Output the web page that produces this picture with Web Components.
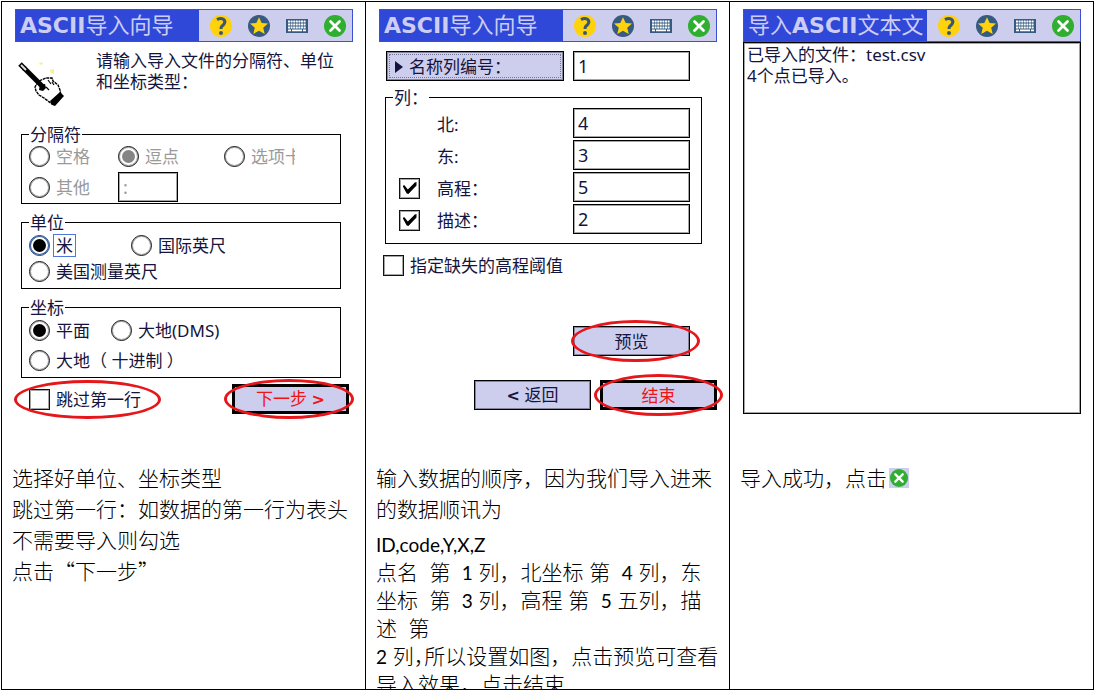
<!DOCTYPE html>
<html lang="zh-CN">
<head>
<meta charset="utf-8">
<title>ASCII导入向导</title>
<style>
  body {
    margin: 0;
    background: #fff;
    color: #14143c;
    font: 17px/21px "Noto Sans", "Noto Sans CJK SC", sans-serif;
  }
  .half { font-feature-settings: "halt"; }
  .quote { font-family: "Noto Sans CJK SC", sans-serif; }
  .latin { font-size: 19px; font-weight: 400; line-height: 19px; }
</style>
</head>
<body>
<step-board>
  <step-card>
    <first-screen slot="screen"></first-screen>
    <step-note>
      <p>选择好单位、坐标类型<br>跳过第一行：如数据的第一行为表头<br>不需要导入则勾选<br>点击<span class="quote">“下一步”</span></p>
    </step-note>
  </step-card>
  <step-card>
    <second-screen slot="screen"></second-screen>
    <step-note>
      <p>输入数据的顺序，因为我们导入进来<br>的数据顺讯为</p>
      <p class="dense"><span class="latin">ID,code,Y,X,Z</span><br>点名  第  <span class="latin">1</span> 列，北坐标 第  <span class="latin">4</span> 列，东<br>坐标  第  <span class="latin">3</span> 列，高程 第  <span class="latin">5</span> 五列，描<br>述  第<br><span class="latin">2</span> 列<span class="half">，</span>所以设置如图，点击预览可查看<br>导入效果，点击结束</p>
    </step-note>
  </step-card>
  <step-card>
    <third-screen slot="screen"></third-screen>
    <step-note>
      <p>导入成功，点击<close-badge></close-badge></p>
    </step-note>
  </step-card>
</step-board>

<script>
const define = (name, html, setup) => {
  const template = document.createElement('template');
  template.innerHTML = html;
  customElements.define(name, class extends HTMLElement {
    constructor() {
      super();
      this.attachShadow({ mode: 'open' });
    }
    connectedCallback() {
      if (this.shadowRoot.hasChildNodes()) return;
      this.shadowRoot.append(template.content.cloneNode(true));
      if (setup) setup(this, this.shadowRoot);
    }
  });
};

const closeIcon = `<svg viewBox="0 0 22 22" aria-hidden="true"><circle cx="11" cy="11" r="11" fill="#2fae2f"/><path d="M6.5 6.5l9 9M15.5 6.5l-9 9" stroke="#fff" stroke-width="2.8" stroke-linecap="round"/></svg>`;

const boxStyles = `
  input[type=checkbox], input[type=radio] {
    appearance: none;
    box-sizing: border-box;
    flex: none;
    display: grid;
    place-items: center;
    width: 21px;
    height: 21px;
    margin: 0;
    border: 1px solid #111;
    background: #fff;
    box-shadow: inset 0 0 0 1px rgba(0, 0, 0, .35);
    color: #000;
  }
  input[type=radio] { border-radius: 50%; }
  input[type=radio]:checked::before {
    content: "";
    width: 13px;
    height: 13px;
    border-radius: 50%;
    background: currentColor;
  }
  input[type=checkbox]:checked::before {
    content: "";
    width: 14px;
    height: 12px;
    background: currentColor;
    clip-path: polygon(0 32%, 14% 28%, 38% 62%, 88% 4%, 100% 0, 100% 30%, 42% 100%, 30% 96%);
  }
  input:disabled { color: #858585; }
`;

define('step-board', `
<style>
  :host {
    box-sizing: border-box;
    display: grid;
    grid-template-columns: repeat(3, minmax(0, 1fr));
    grid-template-rows: auto 1fr;
    height: calc(100vh - 1px);
    margin: 1px 0 0 1px;
    border: solid #000;
    border-width: 1px 0 1px 1px;
    overflow: hidden;
  }
</style>
<slot></slot>`);

define('step-card', `
<style>
  :host {
    box-sizing: border-box;
    display: grid;
    grid-row: span 2;
    grid-template-rows: subgrid;
    min-height: 0;
    border-right: 1px solid #000;
    overflow: hidden;
  }
  .screen { display: grid; padding: 7px 12px 0 13px; }
  .note { min-height: 0; padding: 48px 8px 0 10px; overflow: hidden; }
</style>
<div class="screen"><slot name="screen"></slot></div>
<div class="note"><slot></slot></div>`);

define('step-note', `
<style>
  :host {
    display: block;
    color: #000;
    font: 300 21px/31px Lato, "Noto Sans CJK SC", sans-serif;
  }
  ::slotted(p) { margin: 0 0 6px; white-space: pre; }
  ::slotted(p.dense) { line-height: 28px; }
</style>
<slot></slot>`);

define('close-badge', `
<style>
  :host {
    display: inline-grid;
    place-items: center;
    width: 20px;
    height: 20px;
    margin-left: 2px;
    background: #cdcdee;
    vertical-align: -1px;
  }
  svg { width: 18px; height: 18px; }
</style>${closeIcon}`);

define('title-bar', `
<style>
  :host {
    box-sizing: border-box;
    display: flex;
    height: 33px;
    border: 1px solid #3c50d4;
    background: #cdcdee;
  }
  h2 {
    flex: 1;
    margin: 0;
    padding-left: 4px;
    overflow: hidden;
    background: #3048d8;
    color: #cdcdf4;
    font: 400 22px/31px "DejaVu Sans", "Noto Sans CJK SC", sans-serif;
    white-space: nowrap;
  }
  nav { display: flex; align-items: center; gap: 16px; padding: 0 6px 0 11px; }
  button { width: 22px; height: 22px; padding: 0; border: 0; background: none; }
  svg { display: block; width: 22px; height: 22px; }
</style>
<h2><slot></slot></h2>
<nav>
  <button aria-label="帮助"><svg viewBox="0 0 22 22"><circle cx="11" cy="11" r="11" fill="#ffd20c"/><path d="M7 4.6Q10.5 2.6 13.4 4.2Q16 6.2 14 9.2L11.8 11.3Q11 12.2 11 14" fill="none" stroke="#3a5872" stroke-width="3"/><circle cx="11" cy="18" r="2" fill="#3a5872"/></svg></button>
  <button aria-label="收藏"><svg viewBox="0 0 22 22"><circle cx="11" cy="11" r="11" fill="#365a80"/><path d="M11 2.2l2.7 5.8 6.3.6-4.8 4.2 1.5 6.2-5.7-3.2-5.7 3.2 1.5-6.2-4.8-4.2 6.3-.6z" fill="#ffd20c"/></svg></button>
  <button aria-label="键盘"><svg viewBox="0 0 22 22"><path d="M0 4h22v14H0z" fill="#365a80"/><path d="M2 6.5h18M2 9.5h18M2 12.5h18" stroke="#fff" stroke-width="2.2" stroke-dasharray="2 .6"/><path d="M2 15.3h3M6 15.3h10M17 15.3h3" stroke="#fff" stroke-width="1.8"/></svg></button>
  <button aria-label="关闭">${closeIcon}</button>
</nav>`);

define('field-group', `
<style>
  :host { display: block; }
  fieldset {
    min-width: 0;
    margin: 0;
    padding: var(--group-top, 0) 7px var(--group-bottom, 0);
    border: 1px solid #000;
  }
  legend { padding: 0 1px; }
  .rows {
    display: grid;
    grid-template-columns: var(--group-columns, 1fr);
    grid-auto-rows: minmax(23px, auto);
    align-items: center;
    row-gap: var(--group-gap, 0);
  }
</style>
<fieldset><legend></legend><div class="rows"><slot></slot></div></fieldset>`,
(host, root) => {
  root.querySelector('legend').textContent = host.getAttribute('legend');
  host.addEventListener('pick', event => {
    host.querySelectorAll('choice-item[type=radio]').forEach(item => {
      if (item !== event.target) item.shadowRoot.querySelector('input').checked = false;
    });
  });
});

define('choice-item', `
<style>
  :host { display: flex; align-items: center; white-space: nowrap; }
  ${boxStyles}
  label { padding-left: 6px; }
  :host([disabled]) label { color: #9a9a9a; }
  :host([clipped]) label { width: 44px; overflow: hidden; }
  :host([active]) input { border-color: #123a78; box-shadow: inset 0 0 0 1px #2c559c; }
  :host([active]) label { margin-left: 4px; padding: 0 2px; outline: 1px solid #5076dc; }
</style>
<input id="box"><label for="box"><slot></slot></label>`,
(host, root) => {
  const box = root.querySelector('input');
  box.type = host.getAttribute('type');
  box.checked = host.hasAttribute('checked');
  box.disabled = host.hasAttribute('disabled');
  box.addEventListener('change', () => host.dispatchEvent(new Event('pick', { bubbles: true })));
});

const fieldStyles = `
  input[type=text] {
    box-sizing: border-box;
    width: 100%;
    height: 30px;
    margin: 0;
    padding: 0 4px;
    border: 1px solid #000;
    border-radius: 0;
    background: #fff;
    box-shadow: inset 0 0 0 1px rgba(0, 0, 0, .35);
    color: #14143c;
    font: inherit;
    font-size: 18px;
  }
`;

define('text-field', `
<style>
  :host { display: block; }
  ${fieldStyles}
  input[type=text]:disabled { color: #9a9a9a; }
</style>
<input type="text">`,
(host, root) => {
  const input = root.querySelector('input');
  input.value = host.getAttribute('value');
  input.disabled = host.hasAttribute('disabled');
  input.setAttribute('aria-label', host.getAttribute('label'));
});

define('column-row', `
<style>
  :host {
    display: grid;
    grid-template-columns: 38px 1fr 117px;
    align-items: center;
    height: 32px;
    margin: 0 4px 0 6px;
  }
  ${boxStyles}
  ${fieldStyles}
  label { grid-column: 2; }
  input[type=text] { grid-column: 3; align-self: start; }
</style>
<label for="value"></label><input id="value" type="text">`,
(host, root) => {
  const name = host.getAttribute('label');
  root.querySelector('label').textContent = name;
  root.querySelector('#value').value = host.getAttribute('value');
  if (host.hasAttribute('optional')) {
    const box = document.createElement('input');
    box.type = 'checkbox';
    box.checked = true;
    box.setAttribute('aria-label', name);
    root.querySelector('label').before(box);
  }
});

define('push-button', `
<style>
  :host { display: block; width: 117px; }
  button {
    box-sizing: border-box;
    display: block;
    width: 100%;
    height: 30px;
    padding: 0;
    border: 1px solid #000;
    border-radius: 0;
    background: #cdcdee;
    box-shadow: inset 0 0 0 1px rgba(0, 0, 0, .35);
    color: #14143c;
    font: inherit;
    white-space: pre;
  }
  ::slotted(b) { font-family: "DejaVu Sans", sans-serif; font-size: 16px; }
  ::slotted(svg) { width: 8px; height: 12px; margin-right: 6px; }
  :host([primary]) button { border-width: 3px; box-shadow: none; color: #f01414; }
  :host([wide]) { width: auto; flex: 1; }
  :host([wide]) button {
    padding-left: 8px;
    outline: 1px dotted #77779a;
    outline-offset: -4px;
    text-align: left;
  }
</style>
<button><slot></slot></button>`);

define('callout-ring', `
<style>
  :host { display: block; position: relative; }
  i {
    position: absolute;
    inset: var(--ring-inset, -6px -6px -6px -6px);
    border: 3px solid #e6161a;
    border-radius: 50%;
    pointer-events: none;
  }
</style>
<slot></slot><i></i>`);

define('first-screen', `
<style>
  :host { display: block; }
  .intro { display: flex; gap: 21px; margin: 8px 0 14px; }
  .intro svg { flex: none; width: 60px; height: 60px; }
  p { margin: 0; }
  field-group { margin: 0 12px 8px 6px; }
  .separator { --group-columns: 89px 106px 1fr; --group-gap: 4px; --group-bottom: 1px; }
  .separator text-field { width: 60px; }
  .unit { --group-columns: 102px 1fr; --group-gap: 3px; --group-top: 1px; --group-bottom: 5px; }
  .coordinate { --group-columns: 82px 1fr; --group-gap: 7px; --group-top: 1px; --group-bottom: 5px; margin-bottom: 6px; }
  .full { grid-column: 1 / -1; }
  .actions { display: flex; align-items: center; justify-content: space-between; margin: 0 4px 0 14px; }
  .skip { --ring-inset: -9px -20px -9px -15px; }
  .next { --ring-inset: -5px -5px -5px -8px; }
</style>
<title-bar><b>ASCII</b>导入向导</title-bar>
<div class="intro">
  <svg viewBox="5 -5 60 60" aria-hidden="true">
    <path d="M29 8l3-1 1 2-3 1zM40 15l4-1v5l-3-1z" fill="#f4f48a"/>
    <path d="M28 27l-3 5 1 4 3 4 5 3 4 3 4 3 9-8-1-6-2-5-5-4-1-3-6 0-5 2z" fill="#fff" stroke="#000" stroke-width="1.4" stroke-dasharray="3 .7"/>
    <path d="M14 13L33 32" stroke="#000" stroke-width="5"/>
    <path d="M10 9l5 5" stroke="#000" stroke-width="5"/>
    <path d="M11 10l5 5" stroke="#ddd" stroke-width="2"/>
    <path d="M30 30l5-1 1 4-3 3-4-1z" fill="#000"/>
    <path d="M36 32l3 3M38 25l3 4M42 27l2 3" stroke="#000" stroke-width="1.2"/>
    <path d="M40 46l10-9 4 4-9 10-3-1z" fill="#000"/>
    <path d="M39 44l9-8" stroke="#fff" stroke-width="1.4"/>
  </svg>
  <p>请输入导入文件的分隔符、单位<br>和坐标类型：</p>
</div>
<field-group class="separator" legend="分隔符">
  <choice-item type="radio" disabled>空格</choice-item>
  <choice-item type="radio" disabled checked>逗点</choice-item>
  <choice-item type="radio" disabled clipped>选项卡</choice-item>
  <choice-item type="radio" disabled>其他</choice-item>
  <text-field label="其他分隔符" value=":" disabled></text-field>
</field-group>
<field-group class="unit" legend="单位">
  <choice-item type="radio" checked active>米</choice-item>
  <choice-item type="radio">国际英尺</choice-item>
  <choice-item type="radio" class="full">美国测量英尺</choice-item>
</field-group>
<field-group class="coordinate" legend="坐标">
  <choice-item type="radio" checked>平面</choice-item>
  <choice-item type="radio">大地(DMS)</choice-item>
  <choice-item type="radio" class="full">大地（ 十进制 ）</choice-item>
</field-group>
<div class="actions">
  <callout-ring class="skip"><choice-item type="checkbox">跳过第一行</choice-item></callout-ring>
  <callout-ring class="next"><push-button primary>下一步 <b>&gt;</b></push-button></callout-ring>
</div>`);

define('second-screen', `
<style>
  :host { display: block; }
  .name { display: flex; gap: 9px; margin: 9px 27px 6px 7px; }
  .name text-field { width: 117px; }
  field-group { --group-bottom: 7px; margin: 0 15px 11px 6px; }
  .threshold { margin-left: 4px; }
  .preview { display: flex; justify-content: flex-end; margin: 50px 27px 24px 0; }
  .preview callout-ring { --ring-inset: -6px -10px -6px -2px; }
  .actions { display: flex; justify-content: flex-end; gap: 9px; }
</style>
<title-bar><b>ASCII</b>导入向导</title-bar>
<div class="name">
  <push-button wide><svg viewBox="0 0 8 12" aria-hidden="true"><path d="M0 0l8 6-8 6z" fill="#14143c"/></svg>名称列编号：</push-button>
  <text-field label="名称列编号" value="1"></text-field>
</div>
<field-group legend="列：">
  <column-row label="北:" value="4"></column-row>
  <column-row label="东:" value="3"></column-row>
  <column-row label="高程：" value="5" optional></column-row>
  <column-row label="描述：" value="2" optional></column-row>
</field-group>
<choice-item class="threshold" type="checkbox">指定缺失的高程阈值</choice-item>
<div class="preview"><callout-ring><push-button>预览</push-button></callout-ring></div>
<div class="actions">
  <push-button><b>&lt;</b> 返回</push-button>
  <callout-ring><push-button primary>结束</push-button></callout-ring>
</div>`);

define('third-screen', `
<style>
  :host { display: flex; flex-direction: column; }
  output {
    flex: 1;
    padding: 1px 3px 0;
    border: 1px solid #000;
    box-shadow: inset 0 0 0 1px rgba(0, 0, 0, .35);
  }
</style>
<title-bar>导入<b>ASCII</b>文本文</title-bar>
<output>已导入的文件：test.csv<br>4个点已导入。</output>`);
</script>
</body>
</html>
